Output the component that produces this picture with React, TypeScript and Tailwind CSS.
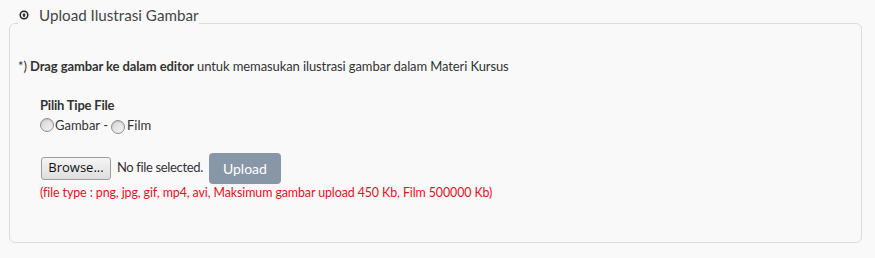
import React from "react";

const Radio = () => (
  <span className="inline-block w-[14px] h-[14px] rounded-full border border-[#8f8f8f] bg-gradient-to-br from-[#d6d6d6] to-[#f4f4f4] shadow-[inset_0_1px_1px_rgba(0,0,0,0.15)] align-middle" />
);

const App = () => {
  return (
    <main
      className="w-[875px] h-[258px] bg-[#f9f9f9] text-[#333]"
      style={{ fontFamily: "Lato, 'Open Sans', sans-serif" }}
    >
      <fieldset className="mx-[9px] w-[853px] h-[243px] border border-[#dcdcdc] rounded-[6px] px-[8px] pb-[40px] bg-[#f9f9f9]">
        <legend className="pt-[3px] pb-[19px] pr-0 flex items-center">
          <svg width="10" height="10" viewBox="0 0 10 10" className="ml-[1px]">
            <circle cx="5" cy="5" r="3.8" fill="none" stroke="#222" strokeWidth="1.5" />
            <path d="M5 3 L7 5.3 L5.8 5.3 L5.8 7 L4.2 7 L4.2 5.3 L3 5.3 Z" fill="#222" />
          </svg>
          <span className="ml-[10px] text-[15.2px] leading-6 text-[#444]">Upload Ilustrasi Gambar</span>
        </legend>

        <p className="mt-[10px] text-[13px] leading-5 tracking-[-0.1px]">
          *) <b className="font-bold">Drag gambar ke dalam editor</b> untuk memasukan ilustrasi gambar dalam Materi Kursus
        </p>

        <div className="ml-[22px]">
          <p className="mt-[19px] text-[13px] leading-5 font-bold tracking-[-0.2px]">Pilih Tipe File</p>
          <div className="flex items-center text-[13px] leading-5">
            <Radio />
            <span className="ml-[1px]">Gambar -</span>
            <span className="ml-[3px]">
              <Radio />
            </span>
            <span className="ml-[2px]">Film</span>
          </div>

          <div className="mt-[18px] flex items-center h-[30px]">
            <button
              className="ml-[1px] h-[23px] w-[70px] text-[13px] text-[#111] border border-[#9c9c9c] rounded-[3px] bg-gradient-to-b from-[#f5f5f5] to-[#dedede]"
              style={{ fontFamily: "'Open Sans', 'Liberation Sans', sans-serif" }}
            >
              Browse...
            </button>
            <span className="ml-[6px] text-[13px] tracking-[-0.35px]">No file selected.</span>
            <button className="ml-[6px] w-[72px] h-[31px] rounded-[4px] bg-[#8797a8] text-white text-[14px]">
              Upload
            </button>
          </div>

          <p className="mt-[1px] text-[12.4px] leading-[18px] tracking-[-0.08px] text-[#e8101a]">
            (file type : png, jpg, gif, mp4, avi, Maksimum gambar upload 450 Kb, Film 500000 Kb)
          </p>
        </div>
      </fieldset>
    </main>
  );
};

export default App;
